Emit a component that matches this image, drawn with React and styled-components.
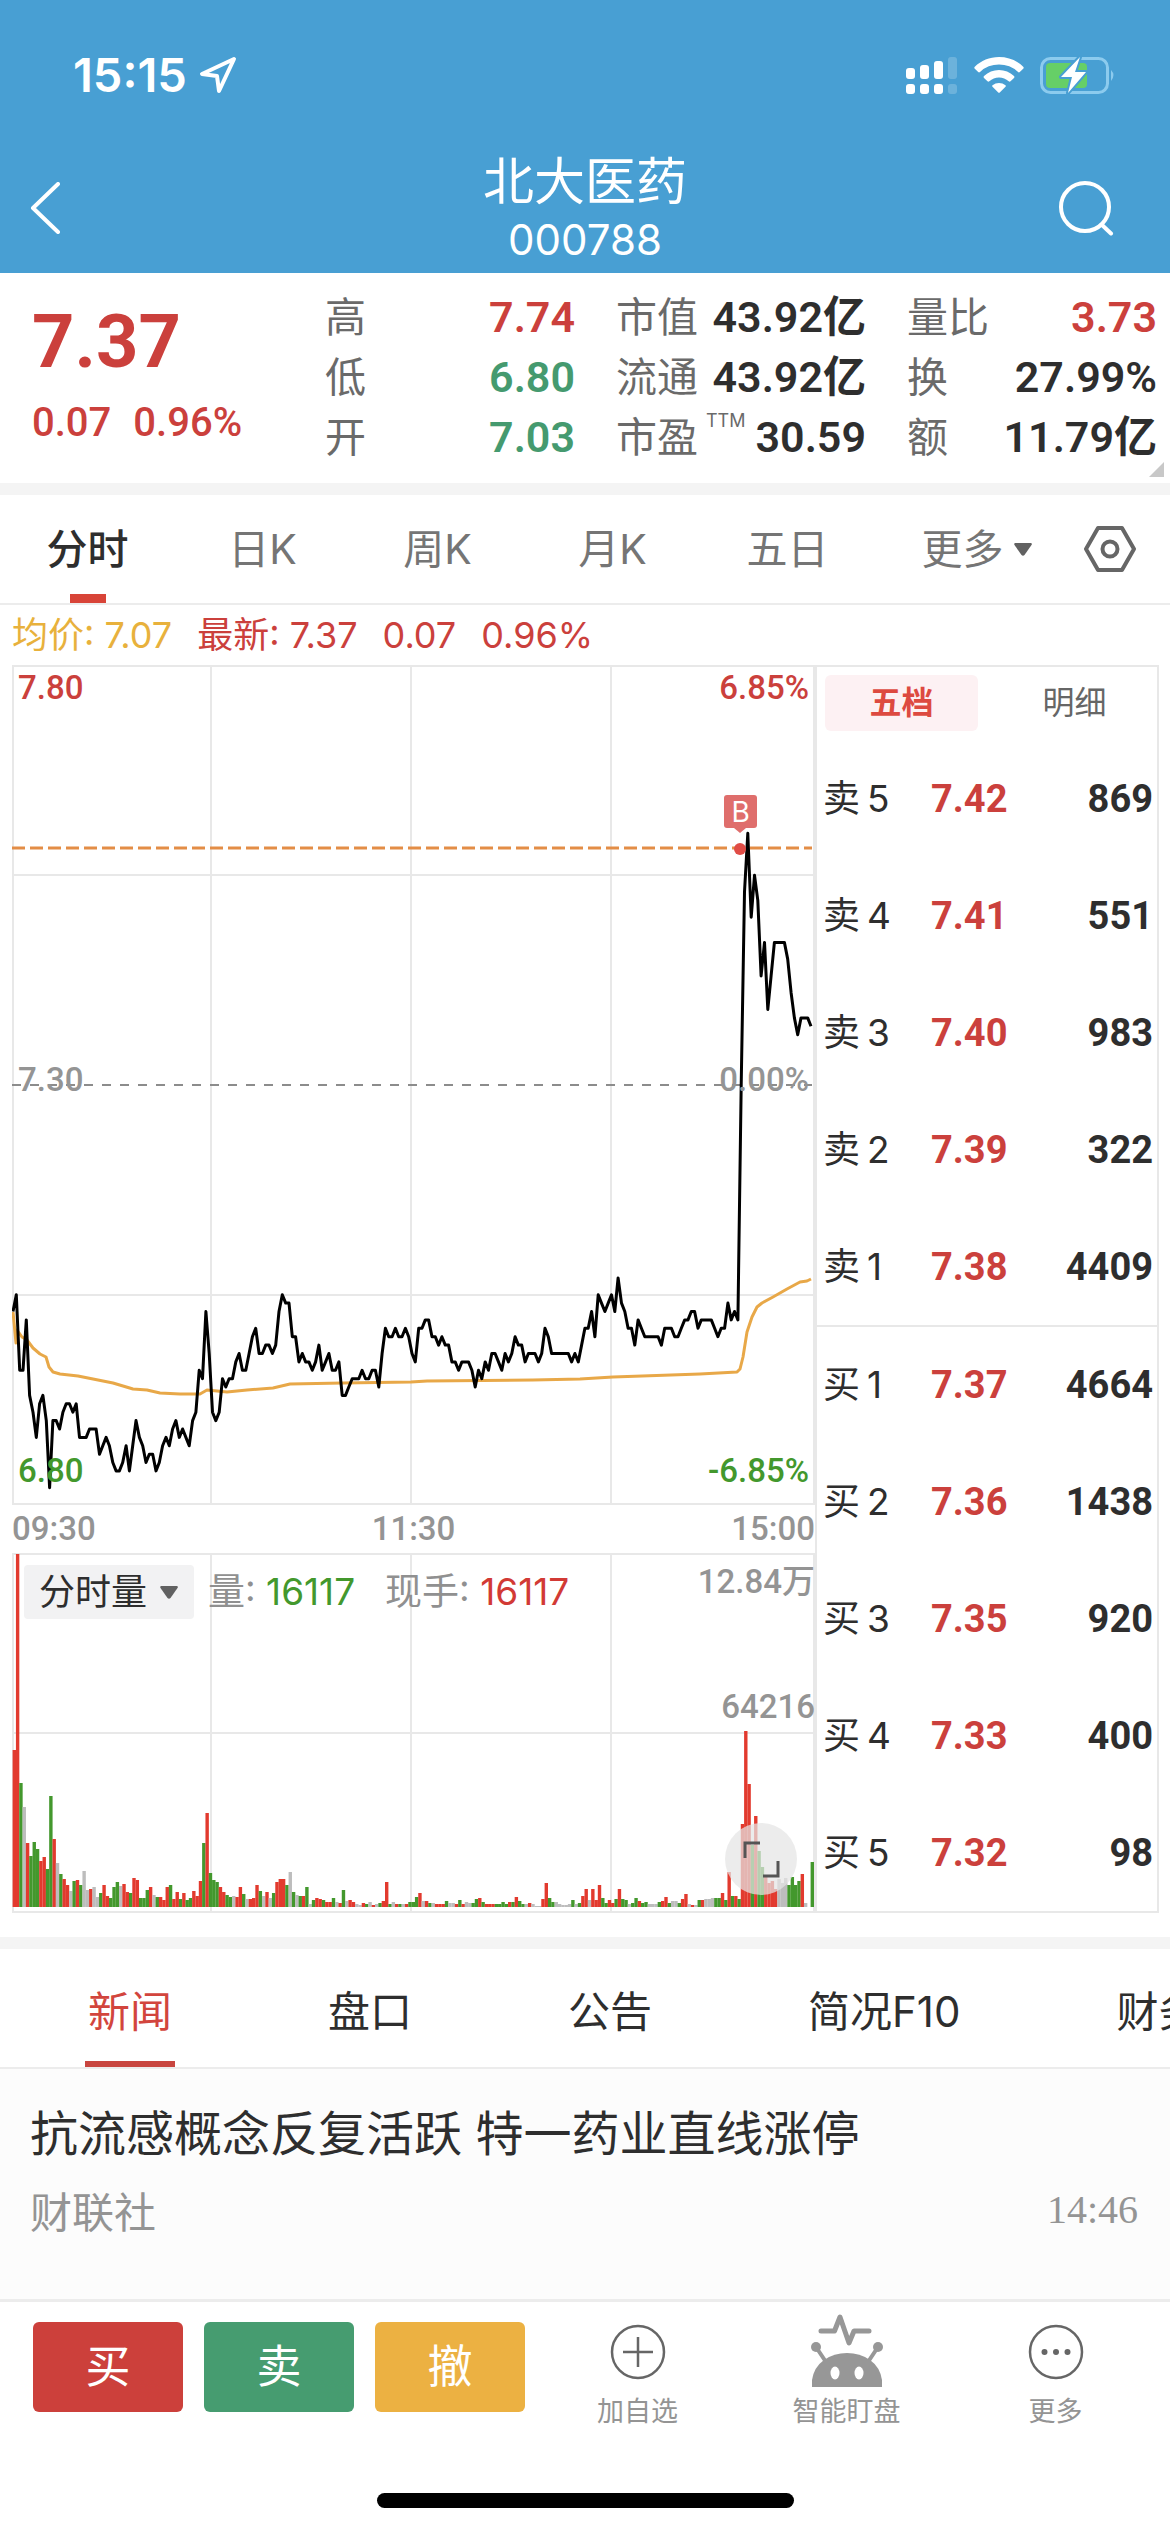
import { useState } from "react";
import styled, { createGlobalStyle } from "styled-components";

const RED = "#cb403c";
const GREEN = "#459a6f";
const CHART_GREEN = "#43982d";
const LINE = "#e8e8e8";

const UI_FONT = `Inter, "Noto Sans CJK SC", sans-serif`;
const NUM_FONT = `Roboto, "Noto Sans CJK SC", sans-serif`;

const GlobalStyle = createGlobalStyle`
  * { box-sizing: border-box; }
  body {
    margin: 0;
    background: #fff;
    color: #2e2e2e;
    font-family: ${UI_FONT};
  }
  button, select {
    margin: 0;
    padding: 0;
    border: 0;
    background: none;
    color: inherit;
    font: inherit;
    cursor: pointer;
  }
  h1, h2, p, dl, dd { margin: 0; font-weight: 400; }
  svg { display: block; }
`;

const Page = styled.div`
  display: flex;
  flex-direction: column;
  min-height: 100vh;
  overflow-x: hidden;
`;

/* ---------- header ---------- */

const Header = styled.header`
  background: #489fd3;
  color: #fff;
`;

const StatusBar = styled.div`
  display: flex;
  justify-content: space-between;
  align-items: center;
  height: 150px;
  padding: 0 54px 0 73px;
`;

const StatusGroup = styled.div`
  display: flex;
  align-items: center;
  gap: ${(p) => p.$gap}px;
`;

const Clock = styled.span`
  font-size: 47px;
  line-height: 50px;
  font-weight: 600;
`;

const TitleBar = styled.div`
  display: grid;
  grid-template-columns: 120px 1fr 120px;
  align-items: center;
  height: 123px;
  padding-bottom: 14px;
`;

const Title = styled.div`
  text-align: center;

  h1 {
    font-size: 51px;
    line-height: 64px;
  }

  p {
    font-size: 42px;
    line-height: 52px;
  }
`;

const IconButton = styled.button`
  display: flex;
  justify-self: ${(p) => p.$side};
  padding: 0 ${(p) => (p.$side === "end" ? 56 : 30)}px;
`;

/* ---------- quote ---------- */

const Quote = styled.section`
  position: relative;
  display: grid;
  grid-template-columns: 252fr 250fr 250fr 250fr;
  column-gap: 41px;
  height: 210px;
  padding: 14px 13px 0 32px;
`;

const Price = styled.div`
  color: ${RED};
  font-family: ${NUM_FONT};
  min-width: 0;

  strong {
    display: block;
    padding-top: 10px;
    font-size: 74px;
    line-height: 90px;
    font-weight: 700;
  }

  p {
    display: flex;
    gap: 22px;
    padding-top: 12px;
    font-size: 40px;
    line-height: 48px;
    font-weight: 500;
  }
`;

const Stats = styled.dl`
  min-width: 0;
`;

const Stat = styled.div`
  display: flex;
  justify-content: space-between;
  align-items: center;
  height: 60px;
  white-space: nowrap;

  dt {
    display: flex;
    align-items: center;
    color: #6a6a6a;
    font-size: 41px;
    line-height: 60px;
  }

  sup {
    align-self: flex-start;
    padding-left: 8px;
    font-size: 18px;
    line-height: 28px;
  }

  dd {
    color: ${(p) => p.$color || "#2e2e2e"};
    font-family: ${NUM_FONT};
    font-size: 43px;
    line-height: 60px;
    font-weight: 600;
  }
`;

const Corner = styled.svg`
  position: absolute;
  right: 6px;
  bottom: 6px;
`;

const Band = styled.div`
  height: 12px;
  background: #f4f4f4;
`;

/* ---------- period tabs ---------- */

const PeriodTabs = styled.nav`
  display: grid;
  grid-template-columns: repeat(5, 175fr) 203fr 64fr;
  height: 110px;
  padding-right: 28px;
  border-bottom: 2px solid #ececec;
`;

const PeriodTab = styled.button`
  position: relative;
  display: flex;
  justify-content: center;
  align-items: center;
  gap: 10px;
  color: ${(p) => (p.$active ? "#2e2e2e" : "#757575")};
  font-size: 41px;
  line-height: 60px;
  font-weight: ${(p) => (p.$active ? 500 : 400)};

  &::after {
    content: "";
    position: absolute;
    left: calc(50% - 18px);
    bottom: 0;
    width: 36px;
    height: 9px;
    background: ${(p) => (p.$active ? "#d84438" : "transparent")};
  }
`;

const Legend = styled.p`
  display: flex;
  align-items: center;
  height: 60px;
  padding: 0 12px;
  gap: 25px;
  color: ${RED};
  font-size: 36px;
  line-height: 60px;
  white-space: pre;
`;

const Average = styled.span`
  color: #e8b13c;
`;

/* ---------- charts ---------- */

const Board = styled.section`
  display: grid;
  grid-template-columns: 803fr 344fr;
  margin: 0 11px 24px 12px;
`;

const ChartBox = styled.div`
  position: relative;

  svg {
    width: 100%;
    height: auto;
  }
`;

const Overlay = styled.div`
  position: absolute;
  inset: 0;
  display: flex;
  flex-direction: column;
  justify-content: space-between;
  padding: ${(p) => p.$pad};
`;

const ScaleRow = styled.div`
  display: flex;
  justify-content: space-between;
  color: ${(p) => p.$color};
  font-family: ${NUM_FONT};
  font-size: 33px;
  line-height: 40px;
  font-weight: 500;
`;

const TimeRow = styled(ScaleRow)`
  align-items: center;
  height: 48px;
`;

const Marker = styled.span`
  position: absolute;
  left: 88.7%;
  top: 15.5%;
  width: 33px;
  height: 33px;
  border-radius: 3px;
  background: #df6e6c;
  color: #fff;
  font-size: 28px;
  line-height: 34px;
  text-align: center;

  &::after {
    content: "";
    position: absolute;
    left: 10px;
    top: 33px;
    border: 6px solid transparent;
    border-bottom: 0;
    border-top: 5px solid #df6e6c;
  }
`;

const VolumeHead = styled.div`
  position: absolute;
  left: 12px;
  top: 12px;
  display: flex;
  align-items: center;
  gap: 14px;
  color: #909090;
  font-size: 37px;
  line-height: 54px;
  white-space: pre;
`;

const SelectWrap = styled.label`
  position: relative;
  display: flex;
  align-items: center;
  width: 170px;
  height: 54px;
  border-radius: 4px;
  background: #f2f2f3;
  color: #2e2e2e;

  select {
    width: 100%;
    height: 100%;
    padding-left: 15px;
    appearance: none;
    font-size: 36px;
  }

  svg {
    position: absolute;
    right: 16px;
    width: 18px;
    pointer-events: none;
  }
`;

const Reading = styled.span`
  margin-right: 16px;

  b {
    color: ${(p) => p.$color};
    font-weight: 400;
  }
`;

const VolumeScale = styled.div`
  position: absolute;
  right: 0;
  top: ${(p) => p.$top};
  color: #949494;
  font-family: ${NUM_FONT};
  font-size: 33px;
  line-height: 40px;
  font-weight: 500;
`;

const Expand = styled.button`
  position: absolute;
  right: 18px;
  bottom: 18px;
  width: 72px;
  height: 72px;
  border-radius: 50%;
  background: rgba(228, 228, 228, 0.72);
`;

/* ---------- order book ---------- */

const Book = styled.div`
  display: flex;
  flex-direction: column;
  border: 2px solid ${LINE};
`;

const BookTabs = styled.div`
  display: grid;
  grid-template-columns: 1fr 1fr;
  height: 73px;
  padding: 8px 6px 9px 8px;
  column-gap: 20px;
`;

const BookTab = styled.button`
  border-radius: 6px;
  background: ${(p) => (p.$active ? "#fdf1f3" : "transparent")};
  color: ${(p) => (p.$active ? "#dd4a40" : "#666")};
  font-size: 32px;
  line-height: 54px;
  font-weight: ${(p) => (p.$active ? 700 : 400)};
`;

const BookTable = styled.table`
  flex: 1;
  width: 100%;
  border-collapse: collapse;

  & + & {
    border-top: 2px solid ${LINE};
  }

  tr {
    height: 117px;
  }

  th {
    padding: 0 0 0 6px;
    width: 94px;
    text-align: left;
    font-size: 37px;
    line-height: 50px;
    font-weight: 400;
  }

  th span {
    padding-left: 7px;
  }

  td {
    padding: 0 4px 0 0;
    text-align: right;
    font-family: ${NUM_FONT};
    font-size: 38px;
    line-height: 50px;
    font-weight: 700;
  }

  td:nth-child(2) {
    padding-left: 20px;
    color: ${RED};
    text-align: left;
  }
`;

/* ---------- news ---------- */

const NewsTabs = styled.nav`
  display: flex;
  gap: 156px;
  height: 120px;
  padding-left: 88px;
  border-bottom: 2px solid #ececec;
  overflow: hidden;
`;

const NewsTab = styled.button`
  position: relative;
  flex: none;
  padding-top: 8px;
  color: ${(p) => (p.$active ? "#d2453d" : "#2e2e2e")};
  font-size: 42px;
  line-height: 60px;

  &::after {
    content: "";
    position: absolute;
    left: -3px;
    right: -3px;
    bottom: 0;
    height: 6px;
    background: ${(p) => (p.$active ? "#c8453f" : "transparent")};
  }
`;

const NewsItem = styled.article`
  flex: 1;
  padding: 32px 32px 0 30px;
  background: #fcfcfc;

  h2 {
    font-size: 48px;
    line-height: 66px;
  }

  p {
    display: flex;
    justify-content: space-between;
    padding-top: 16px;
    color: #949494;
    font-size: 42px;
    line-height: 60px;
  }

  time {
    font-family: "Liberation Serif", serif;
    font-size: 40px;
    line-height: 54px;
  }
`;

/* ---------- bottom bar ---------- */

const BottomBar = styled.footer`
  display: flex;
  gap: 8px;
  height: 194px;
  padding: 20px 10px 0 33px;
  border-top: 3px solid #ececec;
`;

const TradeButtons = styled.div`
  display: flex;
  gap: 21px;
`;

const TradeButton = styled.button`
  width: 150px;
  height: 90px;
  border-radius: 6px;
  background: ${(p) => p.$color};
  color: #fff;
  font-size: 45px;
  line-height: 90px;
`;

const Actions = styled.div`
  flex: 1;
  display: grid;
  grid-template-columns: repeat(3, 1fr);
`;

const Action = styled.button`
  display: flex;
  flex-direction: column;
  align-items: center;
  align-self: start;
  gap: 4px;
  margin-top: -8px;
  color: #949494;
  font-size: 27px;
  line-height: 40px;
`;

const HomeIndicator = styled.div`
  width: 417px;
  height: 15px;
  margin: 0 auto 24px;
  border-radius: 8px;
  background: #000;
`;

/* ---------- data ---------- */

// one price per minute, in cents
const prices = [
  703, 705, 696, 696, 702, 693, 691, 688, 692, 693, 690, 682, 690, 690, 689,
  691, 692, 692, 691, 692, 688, 688, 688, 689, 689, 689, 686, 687, 688, 687,
  685, 684, 684, 685, 687, 684, 687, 690, 688, 687, 685, 686, 686, 684, 685,
  687, 688, 687, 689, 690, 688, 689, 688, 687, 690, 691, 696, 695, 703, 698,
  691, 690, 691, 695, 694, 695, 695, 697, 698, 696, 696, 698, 700, 701, 698,
  698, 699, 699, 698, 699, 703, 705, 704, 704, 700, 700, 697, 698, 697, 697,
  696, 697, 699, 696, 697, 698, 696, 696, 697, 693, 693, 694, 695, 695, 695,
  696, 695, 695, 696, 696, 694, 698, 701, 700, 700, 701, 700, 700, 701, 700,
  698, 697, 701, 701, 702, 702, 700, 700, 699, 700, 699, 699, 697, 697, 696,
  697, 697, 697, 696, 694, 696, 695, 697, 696, 698, 698, 697, 696, 698, 697,
  698, 700, 699, 699, 697, 698, 698, 698, 697, 698, 701, 700, 698, 698, 698,
  698, 698, 698, 697, 698, 697, 699, 701, 701, 703, 700, 705, 704, 703, 704,
  705, 703, 707, 704, 703, 701, 701, 699, 702, 701, 700, 700, 700, 700, 700,
  699, 701, 701, 701, 700, 700, 701, 702, 702, 703, 703, 701, 702, 702, 702,
  702, 701, 700, 701, 701, 704, 702, 703, 702, 730, 753, 760, 750, 755, 752,
  743, 747, 739, 743, 747, 747, 747, 747, 745, 741, 738, 736, 738, 738, 738,
  737,
];

const averageLine =
  "1,647 4,678 5,665 10,672 15,675 21,683 28,689 34,692 37,702 41,707 48,709 66,711 101,718 121,724 135,725 148,728 168,729 188,729 195,725 215,727 235,725 261,723 278,719 331,718 399,717 415,716 521,715 568,714 601,712 688,709 725,707 728,704 731,692 735,667 740,652 745,642 750,638 761,632 775,624 788,617 795,616 799,614";

// one bar per minute: r = up, g = down, y = flat
const volumes = `
  r157 r353 g124 y100 r64 g51 g65 g58 r46 r50 g38 g111 r68 y44 g33 r28 r22 y16 g26 r27
  g22 y36 y17 r18 y20 y10 g14 r22 r11 g9 g20 g25 y21 r23 r15 g14 r29 r27 g9 g9
  g17 r20 y12 g10 r10 r7 r20 g22 r8 r15 g8 r14 g7 g9 r16 r11 r26 g64 r94 g34
  g27 g25 r20 r15 g12 g10 y11 r10 r20 g13 y8 r8 r9 r22 g16 y11 r15 y9 g14 r25
  r28 r28 g22 y35 g15 y12 g11 r11 g20 y3 g7 r9 r8 g7 r5 r5 g9 y5 r4 g17
  y6 r7 r5 y3 y2 r4 g3 y5 r2 y3 g4 r6 r25 g3 y5 r3 g3 y3 r3 g5
  g5 g10 r14 y6 r6 g4 y4 r3 r3 r3 g6 y4 y4 r3 g7 r3 y5 y4 g4 g8
  r9 g5 r3 r3 r3 g3 g3 g5 g3 r5 g5 r10 g6 g3 y3 r4 y3 y1 y1 r8
  r24 g9 g5 y5 y3 y2 y2 y3 g7 y3 g4 r11 r18 y7 r18 r7 r22 g9 g4 r7
  r4 g8 r18 g8 g7 y3 g4 g9 r6 g4 g5 y3 y3 y3 g5 r6 r10 g4 y6 y6
  g4 r8 r13 y3 r2 y2 g7 r7 y8 y8 y9 g9 g9 r14 g7 r35 g11 r11 g8 r83
  r176 r123 g62 r91 g56 g40 r30 r24 r26 r18 y28 y24 y29 g22 g30 g22 g26 r33 y4 y0
  g45`
  .trim()
  .split(/\s+/)
  .map((v) => ({ kind: v[0], height: Number(v.slice(1)) }));

const barColors = { r: "#e23a2e", g: "#43982d", y: "#bdbdbd" };

const sells = [
  ["5", "7.42", "869"],
  ["4", "7.41", "551"],
  ["3", "7.40", "983"],
  ["2", "7.39", "322"],
  ["1", "7.38", "4409"],
];

const buys = [
  ["1", "7.37", "4664"],
  ["2", "7.36", "1438"],
  ["3", "7.35", "920"],
  ["4", "7.33", "400"],
  ["5", "7.32", "98"],
];

const periods = ["分时", "日K", "周K", "月K", "五日", "更多"];
const newsTabs = ["新闻", "盘口", "公告", "简况F10", "财务"];

/* ---------- icons ---------- */

const Caret = ({ width = 18 }) => (
  <svg width={width} height="13" viewBox="0 0 18 13" fill="#616161">
    <path d="M1 0h16q1.500 .5.500 2l-7 10q-1.500 1.500-3 0L.5 2Q-.3.500 1 0z" />
  </svg>
);

const LocationIcon = () => (
  <svg width="38" height="38" viewBox="0 0 38 38" fill="none">
    <path
      d="M35 3 3 18l15 2 2 15z"
      stroke="#fff"
      strokeWidth="4"
      strokeLinejoin="round"
    />
  </svg>
);

const SignalIcon = () => (
  <svg width="52" height="40" viewBox="0 0 52 40" fill="#fff">
    <rect x="0" y="13" width="9" height="11" rx="3" />
    <rect x="14" y="10" width="9" height="14" rx="3" />
    <rect x="28" y="6" width="9" height="18" rx="3" />
    <rect x="42" y="2" width="9" height="22" rx="3" opacity=".2" />
    <rect x="0" y="29" width="9" height="10" rx="3" />
    <rect x="14" y="29" width="9" height="10" rx="3" />
    <rect x="28" y="29" width="9" height="10" rx="3" />
    <rect x="42" y="29" width="9" height="10" rx="3" opacity=".2" />
  </svg>
);

const WifiIcon = () => (
  <svg width="50" height="38" viewBox="0 0 50 38" fill="#fff">
    <path d="M25 1C15.500 1 7 4.700.8 10.700q-1 1 0 2l3.400 3.300q.8.800 1.800 0a27.500 27.500 0 0 1 38 0q1 .8 1.800 0l3.400-3.300q1-1 0-2A35 35 0 0 0 25 1z" />
    <path d="M25 14a22 22 0 0 0-15 6q-1 1 0 2l3.500 3.300q.8.800 1.800 0a14.300 14.300 0 0 1 19.400 0q1 .8 1.800 0L40 22q1-1 0-2a22 22 0 0 0-15-6z" />
    <path d="M25 27a11 11 0 0 0-6.500 2.200q-.8.800 0 1.600l5.500 5.500q1 1 2 0l5.500-5.500q.8-.8 0-1.600A11 11 0 0 0 25 27z" />
  </svg>
);

const BatteryIcon = () => (
  <svg width="76" height="40" viewBox="0 0 76 40" fill="none">
    <rect x="1.500" y="3.500" width="66" height="34" rx="9" stroke="#8ccbee" strokeWidth="3" />
    <path d="M71 15q5 5 0 11z" fill="#8ccbee" />
    <rect x="6" y="8" width="41" height="25" rx="4" fill="#66cf67" />
    <path
      d="M40 2 21 22h11l-4 16 18-21H35z"
      fill="#fff"
      stroke="#489fd3"
      strokeWidth="4"
      strokeLinejoin="round"
      paintOrder="stroke"
    />
  </svg>
);

const BackIcon = () => (
  <svg width="30" height="52" viewBox="0 0 30 52" fill="none">
    <path d="M28 2 3 26l25 24" stroke="#fff" strokeWidth="4" strokeLinecap="round" strokeLinejoin="round" />
  </svg>
);

const SearchIcon = () => (
  <svg width="56" height="56" viewBox="0 0 56 56" fill="none" stroke="#fff" strokeWidth="4">
    <circle cx="27" cy="27" r="24" />
    <path d="m43.500 44.500 9.500 9" strokeLinecap="round" />
  </svg>
);

const HexIcon = () => (
  <svg width="52" height="46" viewBox="0 0 52 46" fill="none" stroke="#666" strokeWidth="4">
    <path d="M14 2h24l12 21-12 21H14L2 23z" strokeLinejoin="round" />
    <circle cx="26" cy="23" r="7.500" />
  </svg>
);

const AddIcon = () => (
  <svg width="72" height="74" viewBox="0 0 72 74" fill="none" stroke="#666" strokeWidth="2.500">
    <circle cx="36" cy="38" r="26" />
    <path d="M36 23v30M21 38h30" />
  </svg>
);

const RobotIcon = () => (
  <svg width="72" height="74" viewBox="0 0 72 74" fill="#979797">
    <path
      d="M10 17h13.500L29 3l9 26 5-12h15"
      fill="none"
      stroke="#979797"
      strokeWidth="5"
      strokeLinecap="round"
      strokeLinejoin="round"
    />
    <path d="m5 33 10 15M67 33 57 48" stroke="#979797" strokeWidth="4" />
    <circle cx="5" cy="33" r="5" />
    <circle cx="67" cy="33" r="5" />
    <path d="M1 73V66q2-13 12-20 10-7 23-7t23 7q10 7 12 20v7z" />
    <ellipse cx="24" cy="59" rx="4.500" ry="6.500" fill="#fff" />
    <ellipse cx="48" cy="59" rx="4.500" ry="6.500" fill="#fff" />
  </svg>
);

const MoreIcon = () => (
  <svg width="72" height="74" viewBox="0 0 72 74" fill="#666">
    <circle cx="36" cy="38" r="26" fill="none" stroke="#666" strokeWidth="2.500" />
    <circle cx="24.500" cy="38" r="3" />
    <circle cx="36" cy="38" r="3" />
    <circle cx="47.500" cy="38" r="3" />
  </svg>
);

/* ---------- parts ---------- */

function PriceChart() {
  const points = prices
    .map((p, i) => `${(1 + i * 3.325).toFixed(1)},${(420 - (p - 730) * 8.39).toFixed(1)}`)
    .join(" ");

  return (
    <ChartBox>
      <svg viewBox="0 0 803 840" fill="none" role="img" aria-label="分时走势">
        <path
          d="M0 1h803M0 210h803M0 630h803M0 839h803M1 0v840M199 0v840M399 0v840M599 0v840M802 0v840"
          stroke={LINE}
          strokeWidth="2"
        />
        <path d="M0 420h800" stroke="#8c8c8c" strokeWidth="2" strokeDasharray="9 9" />
        <path d="M0 183h800" stroke="#e38d46" strokeWidth="3" strokeDasharray="13 5" />
        <polyline points={averageLine} stroke="#e8a848" strokeWidth="3" strokeLinejoin="round" />
        <polyline points={points} stroke="#000" strokeWidth="3" strokeLinejoin="round" />
        <circle cx="728" cy="184" r="6" fill="#e04c46" />
      </svg>
      <Overlay $pad="3px 6px 14px 6px">
        <ScaleRow $color={RED}>
          <span>7.80</span>
          <span>6.85%</span>
        </ScaleRow>
        <ScaleRow $color="#949494">
          <span>7.30</span>
          <span>0.00%</span>
        </ScaleRow>
        <ScaleRow $color={CHART_GREEN}>
          <span>6.80</span>
          <span>-6.85%</span>
        </ScaleRow>
      </Overlay>
      <Marker>B</Marker>
    </ChartBox>
  );
}

function VolumeChart() {
  return (
    <ChartBox>
      <svg viewBox="0 0 803 360" fill="none" role="img" aria-label="分时量">
        <path
          d="M0 1h803M0 180h803M0 359h803M1 0v360M199 0v360M399 0v360M599 0v360M802 0v360"
          stroke={LINE}
          strokeWidth="2"
        />
        {volumes.map((v, i) => (
          <rect
            key={i}
            x={0.6 + i * 3.325}
            y={354 - v.height}
            width="3.4"
            height={v.height}
            fill={barColors[v.kind]}
          />
        ))}
      </svg>
      <VolumeHead>
        <SelectWrap>
          <select aria-label="指标" defaultValue="分时量">
            <option>分时量</option>
          </select>
          <Caret />
        </SelectWrap>
        <Reading $color={CHART_GREEN}>
          量: <b>16117</b>
        </Reading>
        <Reading $color="#d23a35">
          现手: <b>16117</b>
        </Reading>
      </VolumeHead>
      <VolumeScale $top="9px">12.84万</VolumeScale>
      <VolumeScale $top="134px">64216</VolumeScale>
      <Expand aria-label="全屏">
        <svg viewBox="0 0 72 72" fill="none" stroke="#555" strokeWidth="3">
          <path d="M35 20H20v15M38 53h15V38" />
        </svg>
      </Expand>
    </ChartBox>
  );
}

function Levels({ side, rows }) {
  return (
    <BookTable>
      <tbody>
        {rows.map(([level, price, amount]) => (
          <tr key={level}>
            <th scope="row">
              {side}
              <span>{level}</span>
            </th>
            <td>{price}</td>
            <td>{amount}</td>
          </tr>
        ))}
      </tbody>
    </BookTable>
  );
}

export default function App() {
  const [period, setPeriod] = useState("分时");
  const [bookTab, setBookTab] = useState("五档");
  const [newsTab, setNewsTab] = useState("新闻");

  return (
    <Page>
      <GlobalStyle />

      <Header>
        <StatusBar>
          <StatusGroup $gap={12}>
            <Clock>15:15</Clock>
            <LocationIcon />
          </StatusGroup>
          <StatusGroup $gap={16}>
            <SignalIcon />
            <WifiIcon />
            <BatteryIcon />
          </StatusGroup>
        </StatusBar>
        <TitleBar>
          <IconButton $side="start" aria-label="返回">
            <BackIcon />
          </IconButton>
          <Title>
            <h1>北大医药</h1>
            <p>000788</p>
          </Title>
          <IconButton $side="end" aria-label="搜索">
            <SearchIcon />
          </IconButton>
        </TitleBar>
      </Header>

      <Quote>
        <Price>
          <strong>7.37</strong>
          <p>
            <span>0.07</span>
            <span>0.96%</span>
          </p>
        </Price>
        <Stats>
          <Stat $color={RED}>
            <dt>高</dt>
            <dd>7.74</dd>
          </Stat>
          <Stat $color={GREEN}>
            <dt>低</dt>
            <dd>6.80</dd>
          </Stat>
          <Stat $color={GREEN}>
            <dt>开</dt>
            <dd>7.03</dd>
          </Stat>
        </Stats>
        <Stats>
          <Stat>
            <dt>市值</dt>
            <dd>43.92亿</dd>
          </Stat>
          <Stat>
            <dt>流通</dt>
            <dd>43.92亿</dd>
          </Stat>
          <Stat>
            <dt>
              市盈<sup>TTM</sup>
            </dt>
            <dd>30.59</dd>
          </Stat>
        </Stats>
        <Stats>
          <Stat $color={RED}>
            <dt>量比</dt>
            <dd>3.73</dd>
          </Stat>
          <Stat>
            <dt>换</dt>
            <dd>27.99%</dd>
          </Stat>
          <Stat>
            <dt>额</dt>
            <dd>11.79亿</dd>
          </Stat>
        </Stats>
        <Corner width="15" height="15" viewBox="0 0 15 15">
          <path d="M15 0v15H0z" fill="#c8c8c8" />
        </Corner>
      </Quote>

      <Band />

      <PeriodTabs>
        {periods.map((name) => (
          <PeriodTab
            key={name}
            $active={name === period}
            onClick={() => setPeriod(name)}
          >
            {name}
            {name === "更多" && <Caret />}
          </PeriodTab>
        ))}
        <PeriodTab aria-label="设置">
          <HexIcon />
        </PeriodTab>
      </PeriodTabs>

      <Legend>
        <Average>均价: 7.07</Average>
        <span>最新: 7.37</span>
        <span>0.07</span>
        <span>0.96%</span>
      </Legend>

      <Board>
        <div>
          <PriceChart />
          <TimeRow $color="#949494">
            <span>09:30</span>
            <span>11:30</span>
            <span>15:00</span>
          </TimeRow>
          <VolumeChart />
        </div>
        <Book>
          <BookTabs>
            {["五档", "明细"].map((name) => (
              <BookTab
                key={name}
                $active={name === bookTab}
                onClick={() => setBookTab(name)}
              >
                {name}
              </BookTab>
            ))}
          </BookTabs>
          <Levels side="卖" rows={sells} />
          <Levels side="买" rows={buys} />
        </Book>
      </Board>

      <Band />

      <NewsTabs>
        {newsTabs.map((name) => (
          <NewsTab
            key={name}
            $active={name === newsTab}
            onClick={() => setNewsTab(name)}
          >
            {name}
          </NewsTab>
        ))}
      </NewsTabs>

      <NewsItem>
        <h2>抗流感概念反复活跃 特一药业直线涨停</h2>
        <p>
          <span>财联社</span>
          <time>14:46</time>
        </p>
      </NewsItem>

      <BottomBar>
        <TradeButtons>
          <TradeButton $color="#cc403b">买</TradeButton>
          <TradeButton $color="#469c70">卖</TradeButton>
          <TradeButton $color="#ecb142">撤</TradeButton>
        </TradeButtons>
        <Actions>
          <Action>
            <AddIcon />
            加自选
          </Action>
          <Action>
            <RobotIcon />
            智能盯盘
          </Action>
          <Action>
            <MoreIcon />
            更多
          </Action>
        </Actions>
      </BottomBar>
      <HomeIndicator />
    </Page>
  );
}
